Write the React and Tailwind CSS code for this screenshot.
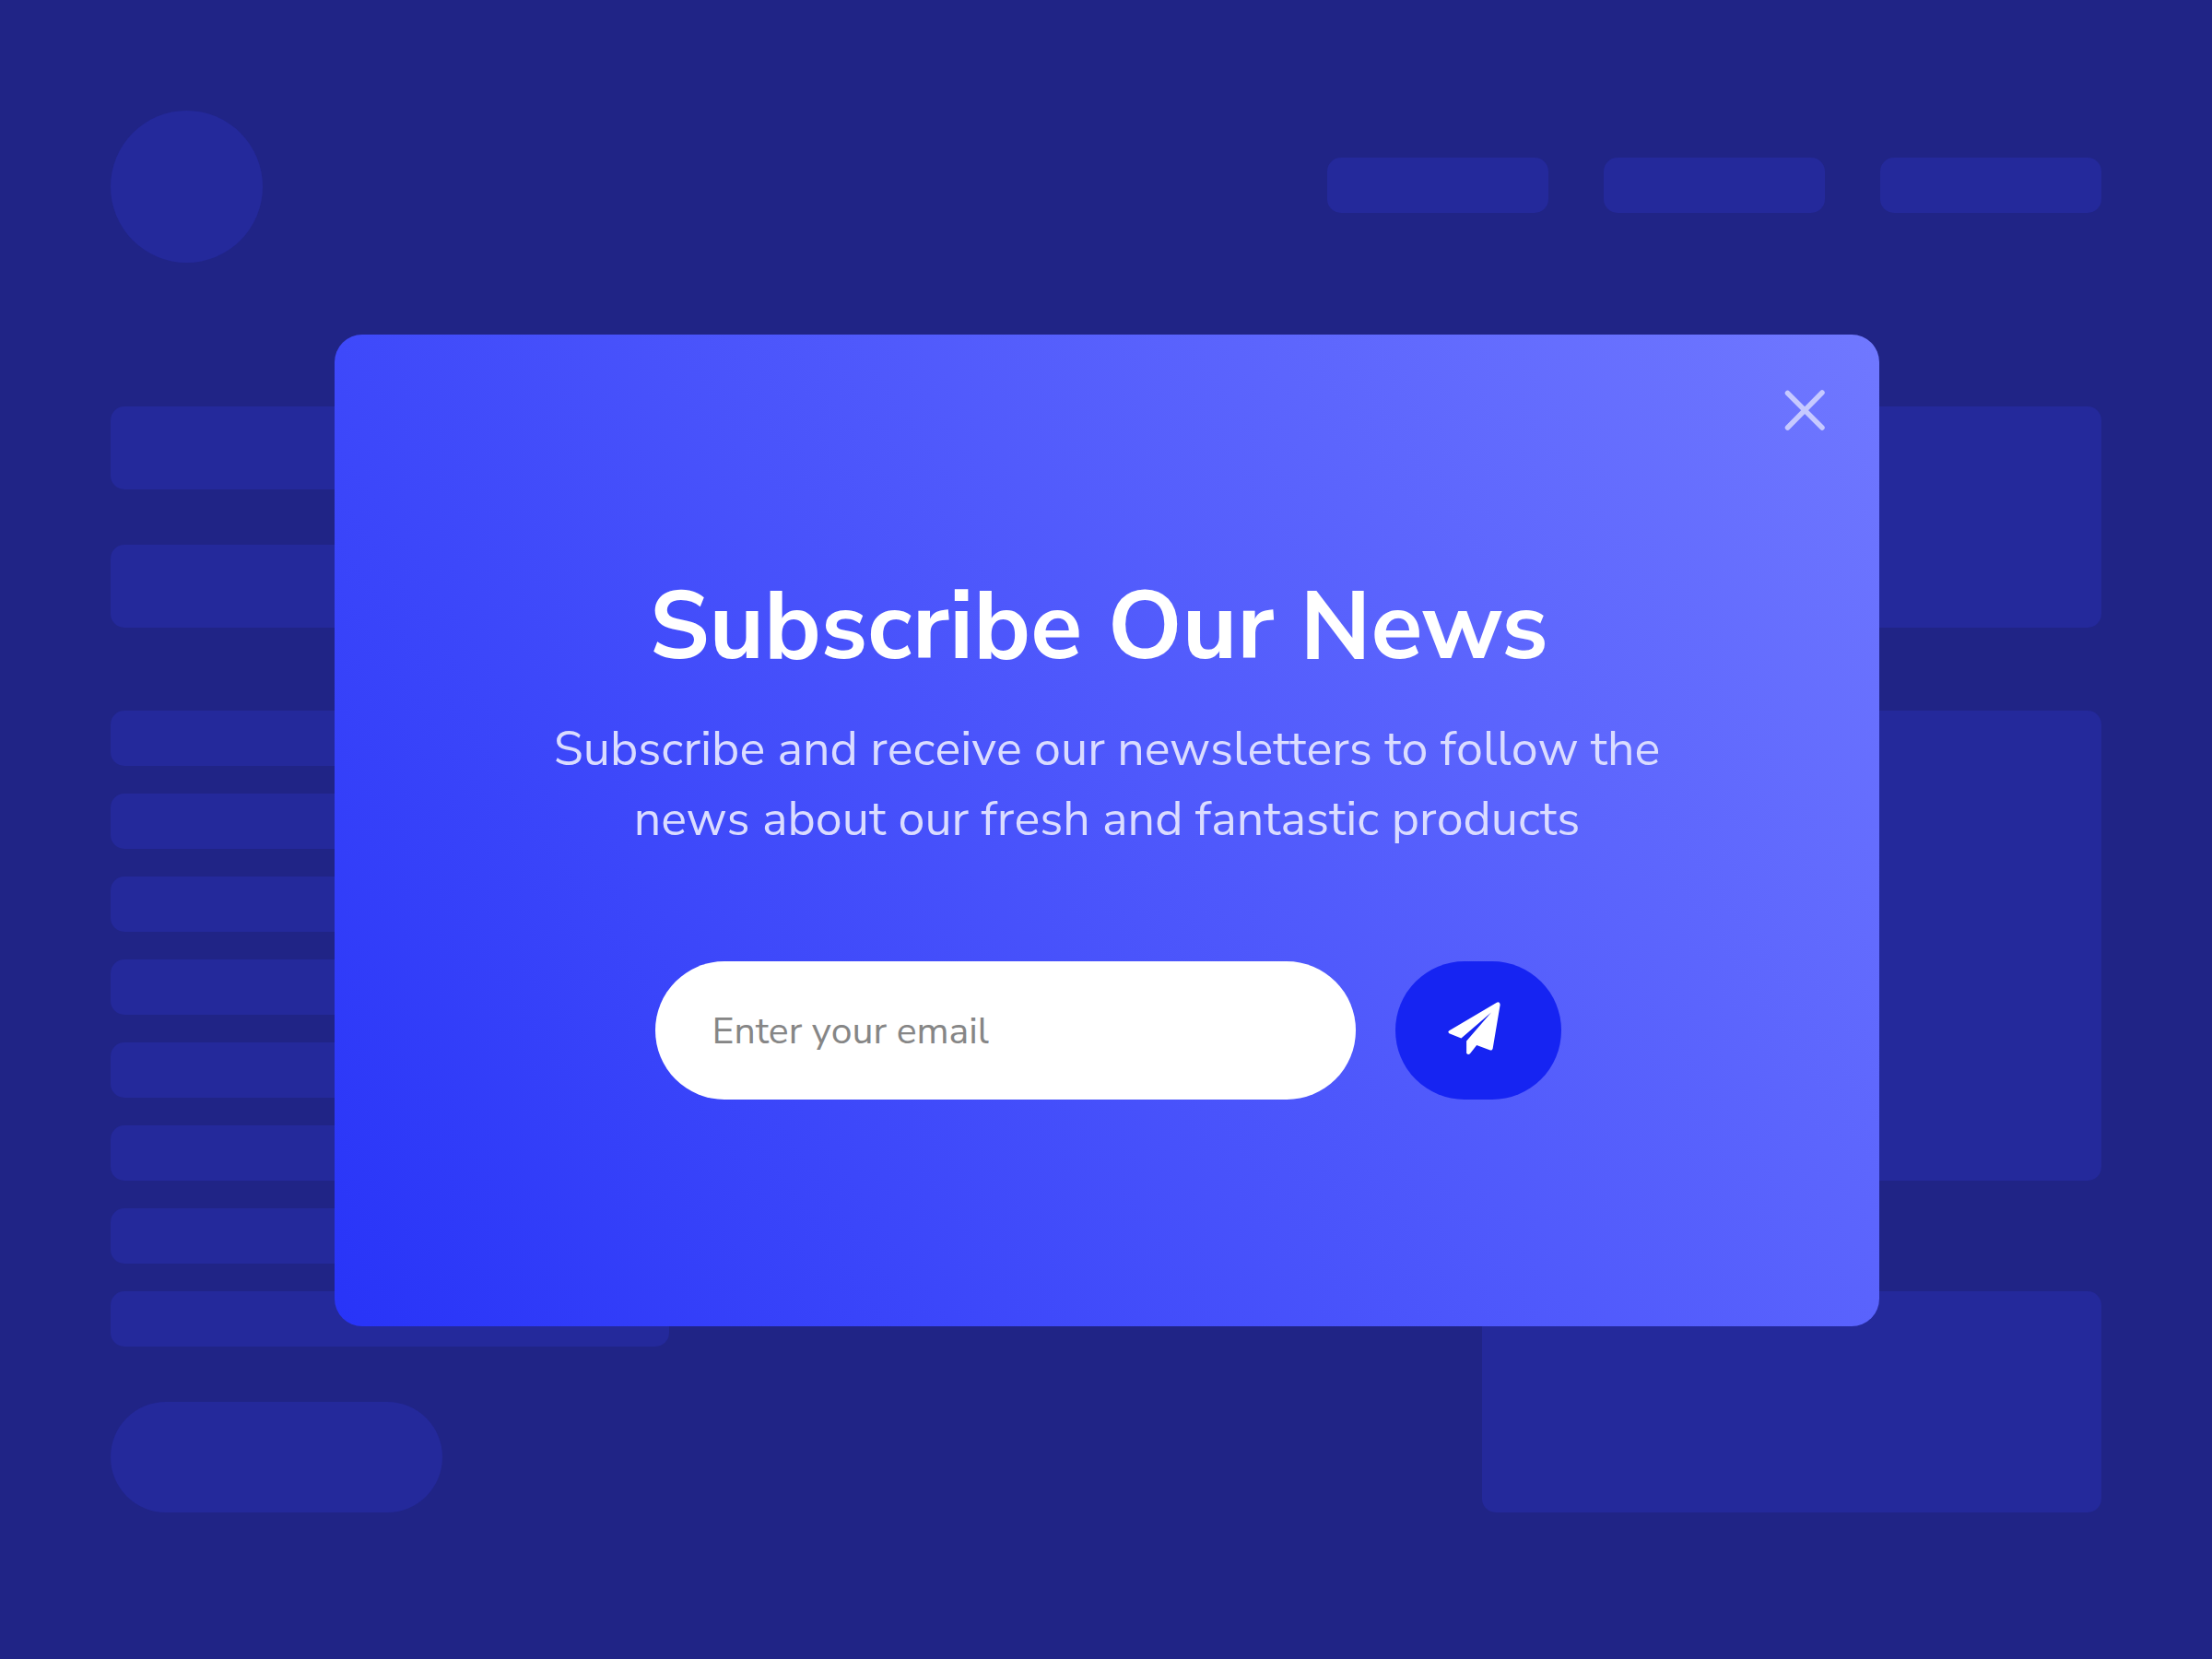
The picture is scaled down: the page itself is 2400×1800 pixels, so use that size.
const lines = ["a", "b", "c", "d", "e", "f", "g", "h"];

function Backdrop() {
  return (
    <div aria-hidden="true" className="flex min-h-screen flex-col px-[120px] pt-[120px] pb-[159px]">
      <div className="flex items-center justify-between">
        <div className="size-[165px] rounded-full bg-[#24299b]" />
        <div className="flex gap-[60px] pb-[3px]">
          <div className="h-[60px] w-60 rounded-[15px] bg-[#24299b]" />
          <div className="h-[60px] w-60 rounded-[15px] bg-[#24299b]" />
          <div className="h-[60px] w-60 rounded-[15px] bg-[#24299b]" />
        </div>
      </div>
      <div className="mt-[156px] flex justify-between">
        <div className="flex w-[606px] flex-col">
          <div className="h-[90px] rounded-[15px] bg-[#24299b]" />
          <div className="mt-[60px] h-[90px] rounded-[15px] bg-[#24299b]" />
          <div className="mt-[90px] flex flex-col gap-[30px]">
            {lines.map((line) => (
              <div key={line} className="h-[60px] rounded-[15px] bg-[#24299b]" />
            ))}
          </div>
          <div className="mt-[60px] h-[120px] w-[360px] rounded-full bg-[#24299b]" />
        </div>
        <div className="flex w-[672px] flex-col">
          <div className="h-[240px] rounded-[15px] bg-[#24299b]" />
          <div className="mt-[90px] h-[510px] rounded-[15px] bg-[#24299b]" />
          <div className="mt-[120px] h-[240px] rounded-[15px] bg-[#24299b]" />
        </div>
      </div>
    </div>
  );
}

function CloseIcon() {
  return (
    <svg viewBox="0 0 44 44" className="size-11" fill="none" stroke="currentColor" strokeWidth="5.5" strokeLinecap="round" aria-hidden="true">
      <path d="M3.5 3.5 41 41M41 3 3.5 41" />
    </svg>
  );
}

function PlaneIcon() {
  return (
    <svg viewBox="0 0 170 170" className="size-[57px]" fill="currentColor" aria-hidden="true">
      <path d="M4 93 158 2Q168-2 169 9L145 151Q143 159 135 156L93 140 72 167Q66 173 60 166V127L140 34 43 118 4 102Q-2 97 4 93Z" />
    </svg>
  );
}

function SubscribeDialog() {
  return (
    <div
      role="dialog"
      aria-modal="true"
      aria-labelledby="subscribe-title"
      className="relative flex w-full max-w-[1676px] flex-col items-center rounded-[30px] bg-linear-55/srgb from-[#2834f8] to-[#7078ff] px-16 pt-[252px] pb-[246px] text-center"
    >
      <button type="button" aria-label="Close" className="absolute top-[60px] right-[59px] text-[#c6c9ff]">
        <CloseIcon />
      </button>
      <h2 id="subscribe-title" className="pr-[18px] text-[103px] leading-[130px] font-bold text-white">
        Subscribe Our News
      </h2>
      <p className="mt-[30px] max-w-[1260px] text-[52px] leading-[76px] text-[#dadcff] [font-kerning:none]">
        Subscribe and receive our newsletters to follow the news about our fresh and fantastic products
      </p>
      <form className="mt-[116px] flex w-full justify-center gap-[43px] pl-0.5" onSubmit={(event) => event.preventDefault()}>
        <input
          type="email"
          aria-label="Email"
          placeholder="Enter your email"
          className="h-[150px] w-full max-w-[760px] rounded-full bg-white px-[62px] text-[41px] text-gray-800 placeholder:text-[#868686] focus:outline-none"
        />
        <button type="submit" aria-label="Subscribe" className="flex h-[150px] w-[180px] shrink-0 items-center justify-center rounded-full bg-[#1624f2] pr-2 pb-1.5 text-white">
          <PlaneIcon />
        </button>
      </form>
    </div>
  );
}

export default function App() {
  return (
    <div className="grid min-h-screen bg-[#202486] font-['Nunito_Sans','Open_Sans',sans-serif]">
      <div className="col-start-1 row-start-1">
        <Backdrop />
      </div>
      <div className="z-10 col-start-1 row-start-1 flex items-center justify-center pt-0.5 pr-8 pl-[34px]">
        <SubscribeDialog />
      </div>
    </div>
  );
}
